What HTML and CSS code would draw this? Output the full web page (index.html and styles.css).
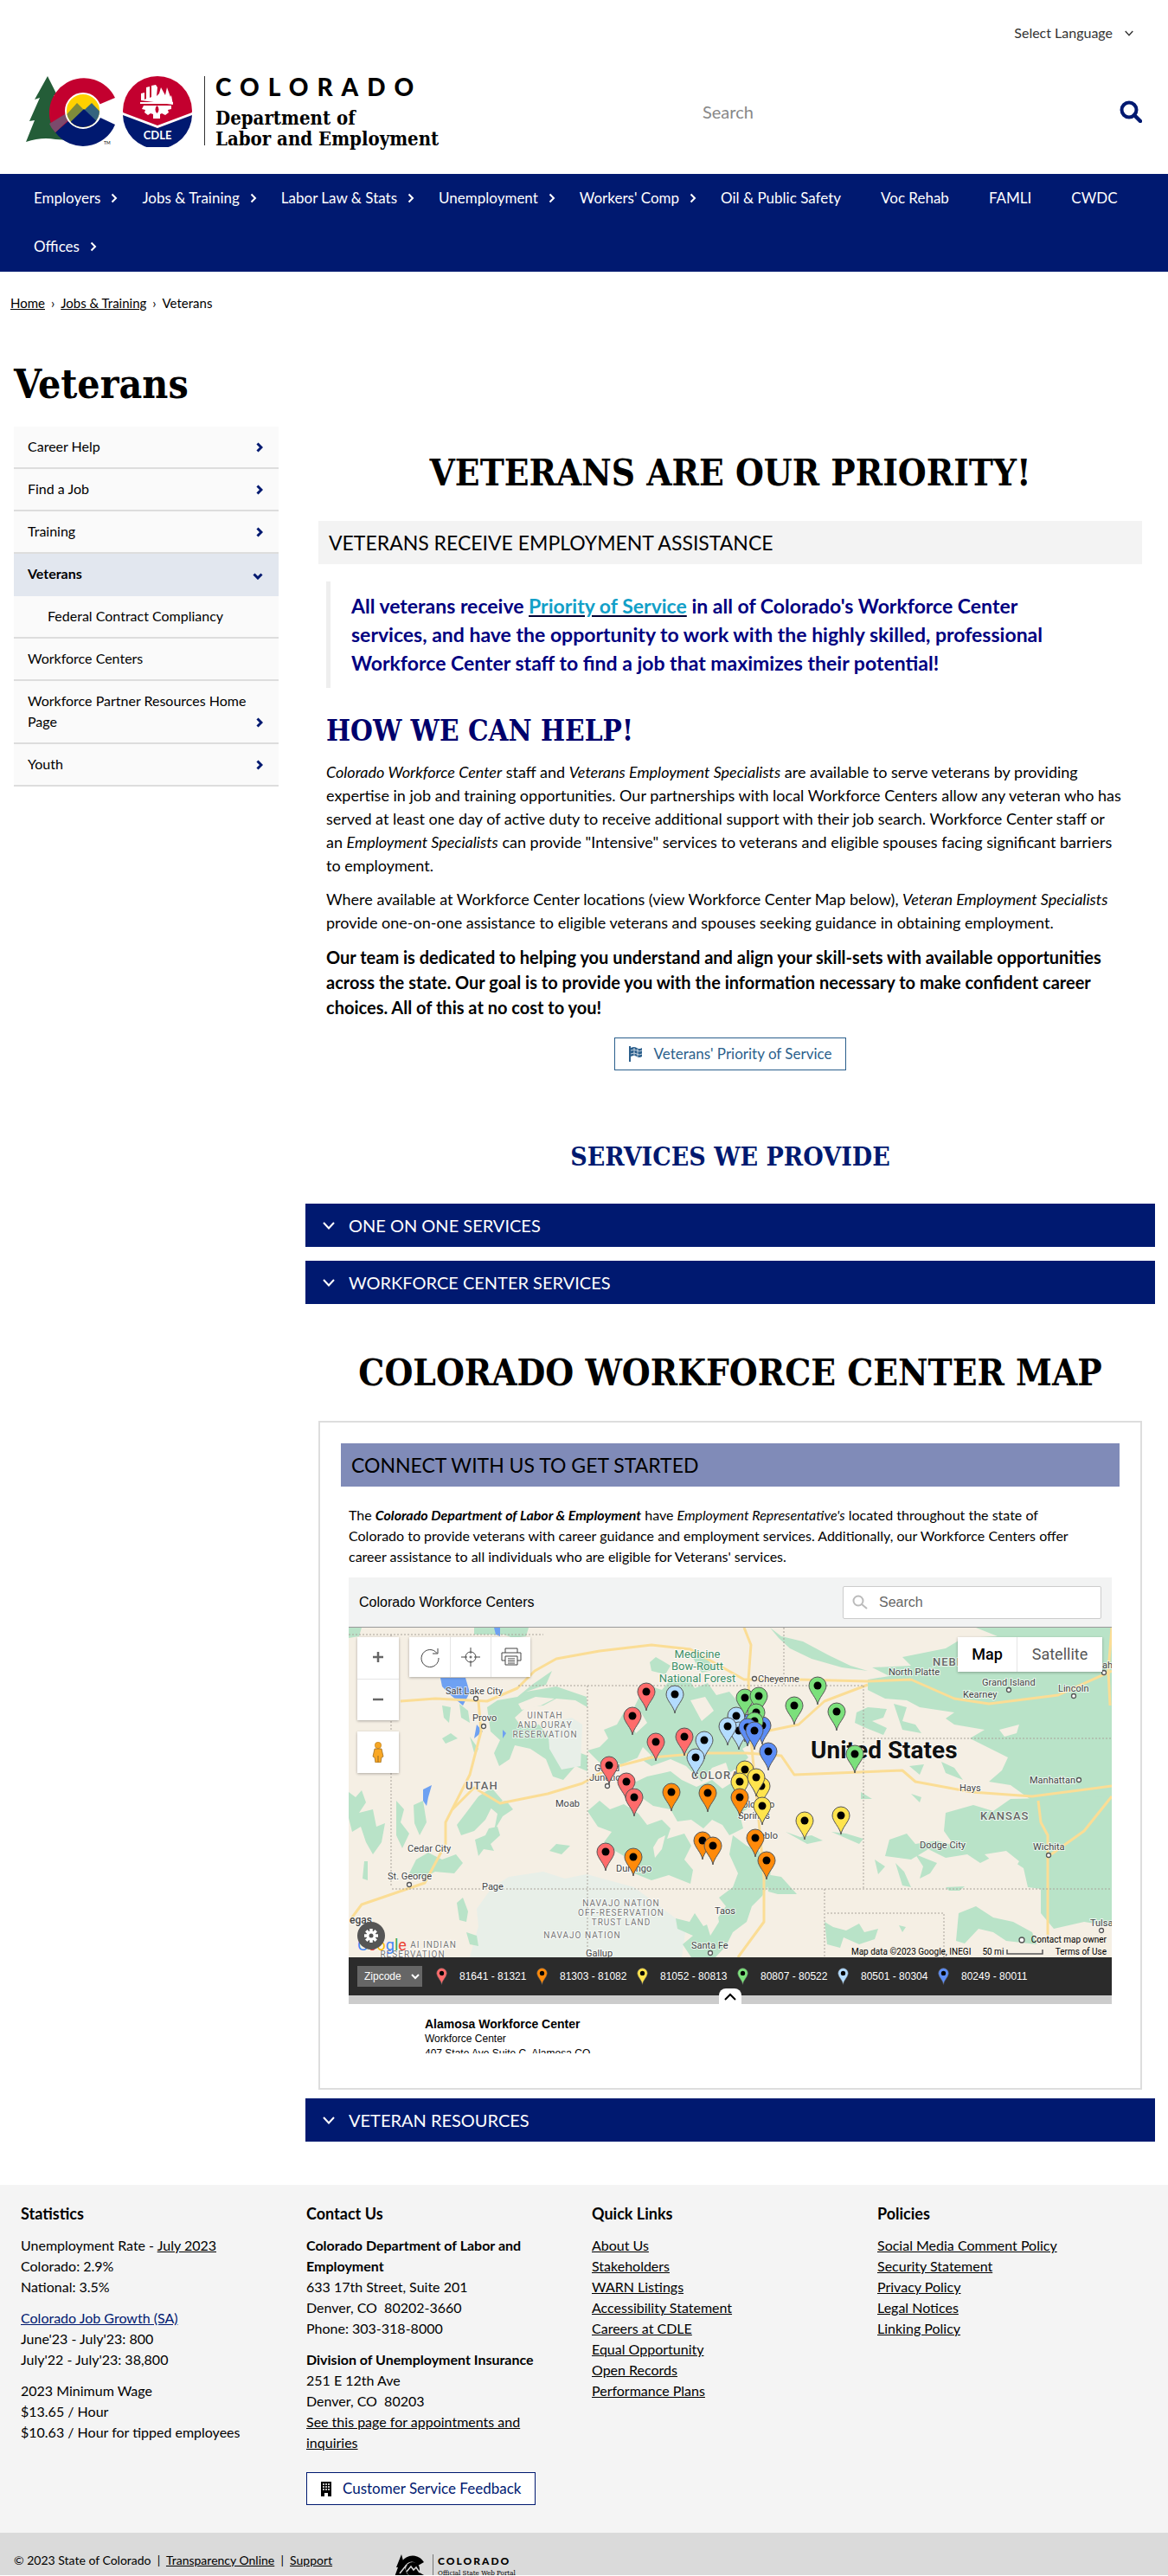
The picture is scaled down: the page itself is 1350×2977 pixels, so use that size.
FILE: index.html
```html
<!DOCTYPE html>
<html lang="en">
<head>
<meta charset="utf-8">
<meta name="viewport" content="width=device-width, initial-scale=1">
<title>Veterans | Department of Labor &amp; Employment</title>
<link rel="stylesheet" href="styles.css">
</head>
<body>
<svg class="defs" width="0" height="0" aria-hidden="true">
  <clipPath id="sun"><circle cx="66" cy="40" r="19"/></clipPath>
  <g id="pin-shape"><path d="M11 33C10 25 1 18 1 11a10 10 0 0 1 20 0c0 7-9 14-10 22z" fill="currentColor" stroke="#555" stroke-width="1"/><circle cx="11" cy="11" r="4.5" fill="#000"/></g>
  <symbol id="right" viewBox="0 0 8 12"><path d="M1.5 1.5 6 6 1.5 10.5" fill="none" stroke="currentColor" stroke-width="2"/></symbol>
  <symbol id="right-bold" viewBox="0 0 8 12"><path d="M1.5 1.5 6 6 1.5 10.5" fill="none" stroke="currentColor" stroke-width="3"/></symbol>
  <symbol id="down" viewBox="0 0 14 9"><path d="M1 1 7 7.5 13 1" fill="none" stroke="currentColor" stroke-width="2"/></symbol>
  <symbol id="down-bold" viewBox="0 0 12 8"><path d="M1.5 1.5 6 6 10.5 1.5" fill="none" stroke="currentColor" stroke-width="3"/></symbol>
  <symbol id="pin" viewBox="0 0 22 34"><use href="#pin-shape"/></symbol>
</svg>

<header class="masthead">
  <div class="language">
    <button class="language-button" type="button">Select Language <svg class="icon-down-small"><use href="#down"/></svg></button>
  </div>
  <div class="brand-row">
    <a class="brand" href="#" aria-label="Colorado Department of Labor and Employment">
      <svg class="brand-mark" viewBox="0 0 206 82">
        <path d="M25 0 36 22 32 22 44 48 50 74 34 73Q18 70 0 76L10 51 4 52 16 25 10 27z" fill="#245d38"/>
        <path d="M103 25A40 40 0 1 0 34 65L52 50A19 19 0 0 1 84 33z" fill="#c3002f"/>
        <path d="M34 65A40 40 0 0 0 103 56L86 48A21 21 0 0 1 50 51z" fill="#001970"/>
        <path d="M27 55 45 44 51 49 34 65Q29 60 27 55z" fill="#7b4a6c"/>
        <circle cx="66" cy="40" r="20" fill="#ffd100" stroke="#fff" stroke-width="2"/>
        <g clip-path="url(#sun)">
          <path d="M40 52 59 31 78 50 60 64z" fill="#7f8c3a"/>
          <path d="M60 46 76 31 92 48 82 60z" fill="#35647e"/>
          <path d="M44 60 67 38 90 60V70H44z" fill="#001970"/>
        </g>
        <text class="brand-tm" x="90" y="79">TM</text>
        <circle cx="152" cy="40" r="40" fill="#c3002f"/>
        <path d="M112 44 152 60 192 44A40 40 0 0 1 112 44z" fill="#001970"/>
        <path d="M112 42 152 57 192 42v3L152 60 112 45z" fill="#fff"/>
        <path d="M132 30h38v2h-38zM133 28V20l4-1v8l2-1V13l4-1v13l2-1V11l5-1 2 3-1 10 3-3 2-7 5 9 2-9 4 11 1-2 2 11z" fill="#fff"/>
        <path d="M136 34h32v4l-4 1 1 3-4 3-4-2-2 1v5h-8v-5l-3-1-3 2-4-3 1-3-4-1zM151.500 34a6 6 0 0 0 0 9 6 6 0 0 0 0-9" fill="#fff" fill-rule="evenodd"/>
        <text class="brand-cdle" x="152" y="73">CDLE</text>
      </svg>
      <span class="brand-text">
        <span class="brand-state">COLORADO</span>
        <span class="brand-dept">Department of<br>Labor and Employment</span>
      </span>
    </a>
    <form class="search">
      <input class="search-input" type="search" placeholder="Search" aria-label="Search">
      <button class="search-button" type="button" aria-label="Submit search"><svg viewBox="0 0 26 26" width="26" height="26"><circle cx="11" cy="11" r="8.5" fill="none" stroke="#001970" stroke-width="4"/><path d="M17 17l7 7" stroke="#001970" stroke-width="4.5" stroke-linecap="round"/></svg></button>
    </form>
  </div>
</header>

<nav class="main-nav" aria-label="Main">
  <a class="nav-item" href="#">Employers <svg class="icon-right"><use href="#right"/></svg></a>
  <a class="nav-item" href="#">Jobs &amp; Training <svg class="icon-right"><use href="#right"/></svg></a>
  <a class="nav-item" href="#">Labor Law &amp; Stats <svg class="icon-right"><use href="#right"/></svg></a>
  <a class="nav-item" href="#">Unemployment <svg class="icon-right"><use href="#right"/></svg></a>
  <a class="nav-item" href="#">Workers' Comp <svg class="icon-right"><use href="#right"/></svg></a>
  <a class="nav-item plain" href="#">Oil &amp; Public Safety</a>
  <a class="nav-item plain" href="#">Voc Rehab</a>
  <a class="nav-item plain" href="#">FAMLI</a>
  <a class="nav-item plain" href="#">CWDC</a>
  <a class="nav-item" href="#">Offices <svg class="icon-right"><use href="#right"/></svg></a>
</nav>

<nav class="breadcrumb" aria-label="Breadcrumb"><a href="#">Home</a> <span>›</span> <a href="#">Jobs &amp; Training</a> <span>›</span> <span>Veterans</span></nav>

<h1 class="page-title">Veterans</h1>

<div class="columns">
  <nav class="side-nav" aria-label="Section">
    <a class="side-item" href="#">Career Help <svg class="icon-right"><use href="#right-bold"/></svg></a>
    <a class="side-item" href="#">Find a Job <svg class="icon-right"><use href="#right-bold"/></svg></a>
    <a class="side-item" href="#">Training <svg class="icon-right"><use href="#right-bold"/></svg></a>
    <a class="side-item current" href="#">Veterans <svg class="icon-down"><use href="#down-bold"/></svg></a>
    <a class="side-item child" href="#">Federal Contract Compliancy</a>
    <a class="side-item" href="#">Workforce Centers</a>
    <a class="side-item" href="#">Workforce Partner Resources Home Page <svg class="icon-right"><use href="#right-bold"/></svg></a>
    <a class="side-item" href="#">Youth <svg class="icon-right"><use href="#right-bold"/></svg></a>
  </nav>

  <main class="content">
    <section class="panel">
      <h2 class="title">VETERANS ARE OUR PRIORITY!</h2>
      <h3 class="band">VETERANS RECEIVE EMPLOYMENT ASSISTANCE</h3>
      <blockquote class="quote">All veterans receive <a href="#">Priority of Service</a> in all of Colorado's Workforce Center services, and have the opportunity to work with the highly skilled, professional Workforce Center staff to find a job that maximizes their potential!</blockquote>
      <div class="prose">
        <h2 class="help-title">HOW WE CAN HELP!</h2>
        <p><em>Colorado Workforce Center</em> staff and <em>Veterans Employment Specialists</em> are available to serve veterans by providing expertise in job and training opportunities. Our partnerships with local Workforce Centers allow any veteran who has served at least one day of active duty to receive additional support with their job search. Workforce Center staff or<br>an <em>Employment Specialists</em> can provide "Intensive" services to veterans and eligible spouses facing significant barriers<br>to employment.</p>
        <p>Where available at Workforce Center locations (view Workforce Center Map below), <em>Veteran Employment Specialists</em> provide one-on-one assistance to eligible veterans and spouses seeking guidance in obtaining employment.</p>
        <p class="strong">Our team is dedicated to helping you understand and align your skill-sets with available opportunities across the state. Our goal is to provide you with the information necessary to make confident career choices. All of this at no cost to you!</p>
      </div>
      <a class="outline-button priority" href="#"><svg width="16" height="18" viewBox="0 0 16 18"><path d="M1 0v18" stroke="#2b5f8c" stroke-width="2"/><path d="M2 2q4-2 7 0t6 0v10q-3 2-6 0t-7 0z" fill="#2b5f8c"/><path d="M6 2v9M10 3v9M2 5q4-2 7 0t6 0M2 9q4-2 7 0t6 0" stroke="#fff" stroke-width=".7" fill="none"/></svg>Veterans' Priority of Service</a>
    </section>

    <h2 class="services-title">SERVICES WE PROVIDE</h2>
    <button class="accordion" type="button"><svg class="icon-accordion"><use href="#down"/></svg>ONE ON ONE SERVICES</button>
    <button class="accordion" type="button"><svg class="icon-accordion"><use href="#down"/></svg>WORKFORCE CENTER SERVICES</button>

    <h2 class="title map-title">COLORADO WORKFORCE CENTER MAP</h2>
    <section class="card">
      <h3 class="band blue">CONNECT WITH US TO GET STARTED</h3>
      <div class="card-body">
        <p>The <strong><em>Colorado Department of Labor &amp; Employment</em></strong> have <em>Employment Representative's</em> located throughout the state of<br>Colorado to provide veterans with career guidance and employment services. Additionally, our Workforce Centers offer<br>career assistance to all individuals who are eligible for Veterans' services.</p>
        <div class="widget">
          <div class="widget-head">
            <span>Colorado Workforce Centers</span>
            <label class="widget-search"><svg width="18" height="18" viewBox="0 0 18 18"><circle cx="7" cy="7" r="5.5" fill="none" stroke="#bbb" stroke-width="2"/><path d="M11 11l6 5" stroke="#bbb" stroke-width="2"/></svg><input type="search" placeholder="Search" aria-label="Search centers"></label>
          </div>
          <div class="map">
            <svg class="map-art" viewBox="0 0 882 381" preserveAspectRatio="xMidYMid slice">
              <rect width="882" height="381" fill="#f5efe4"/>
              <path d="M165 301 185 288 225 282 250 290 275 285 330 300 370 330 390 345 385 381 140 381 150 345 148 325z" fill="#e8efe8"/>
              <g fill="#b9e3c8">
                <path d="M725 0 882 0 882 200 790 200 765 182 740 178 755 165 762 150 742 140 718 128 735 118 700 112 690 105 700 98 660 92 645 84 620 82 600 72 600 60 625 56 605 46 650 44 640 34 690 24 710 12 750 10z"/>
                <path d="M690 214 722 205 745 212 765 198 882 195 882 345 850 340 815 348 800 330 800 302 785 300 780 278 765 268 750 262 730 272 715 262 690 266 670 256 650 268 620 264 625 245 645 238 655 250 680 246 700 252 688 235z"/>
                <path d="M608 268 620 276 612 285zM632 272 642 282 650 300 640 298zM655 262 680 272 672 284 660 290 664 276z"/>
                <path d="M690 300 712 299 706 304 694 304zM705 330 725 322 745 335 768 340 790 352 795 366 760 362 745 352 728 348 712 365 702 362z"/>
                <path d="M550 340 560 346 575 350 590 342 596 352 612 348 608 360 590 366 572 358 568 370 553 366zM636 344 644 346 640 352z"/>
                <path d="M587 98 600 92 622 94 618 104 605 108 622 116 618 124 598 116 585 110zM630 88 645 92 640 108 655 112 662 122 640 118zM648 160 665 158 660 170zM685 155 700 162 710 176 690 168z"/>
                <path d="M487 0 500 10 525 16 555 32 580 44 600 50 570 46 535 36 510 24 497 12z"/>
                <path d="M592 190 605 198 592 198zM650 192 662 196 660 202z"/>
                <path d="M0 0 15 0 12 10 0 12zM145 0 208 0 205 10 190 12 180 8 145 8z"/>
                <path d="M160 92 172 84 195 80 212 66 235 50 228 66 205 74 240 68 275 80 276 92 262 84 240 82 225 90 205 92 192 104 200 115 220 112 235 130 255 140 276 148 276 166 262 160 248 176 236 172 228 152 210 140 192 136 186 152 174 160 168 145 175 130 164 120z"/>
                <path d="M135 215 150 195 165 185 178 200 165 208 158 222 145 235 130 240 125 228zM168 235 172 215 160 205 182 200 190 210 178 218z"/>
                <path d="M276 142 290 138 300 128 295 118 310 112 318 98 330 92 338 76 350 68 362 72 372 60 392 58 400 70 415 64 425 78 440 74 455 92 464 108 468 132 455 140 462 150 452 160 440 168 436 156 420 162 408 178 390 160 372 152 350 160 335 150 315 158 305 168 290 156z"/>
                <path d="M276 212 290 200 302 210 318 204 335 215 345 228 362 222 372 232 368 244 388 238 396 252 388 268 398 280 395 296 370 286 350 292 330 284 325 268 308 258 295 248 304 236 288 230z"/>
                <path d="M345 172 372 166 385 176 402 184 420 176 432 186 448 176 460 190 462 208 452 216 456 232 440 240 432 228 420 222 410 232 396 222 380 224 372 210 352 206 338 196 328 180z"/>
                <path d="M444 240 460 252 474 258 488 280 486 296 478 310 466 322 460 340 444 352 436 368 424 381 396 381 386 366 398 356 380 348 378 336 394 340 400 330 410 345 425 338 436 322 428 312 444 300 450 284 440 262z"/>
                <path d="M482 285 500 288 518 308 496 308 485 305zM505 236 522 242 535 240 548 246 530 250zM558 236 575 238 595 244 590 250z"/>
                <path d="M0 190 8 196 15 188 20 202 12 214 28 210 32 230 42 226 38 248 28 262 20 248 14 230 4 236 0 220z"/>
                <path d="M55 200 64 210 60 225 70 238 62 255 55 240zM75 205 86 200 90 225 82 240 76 226z"/>
                <path d="M78 268 92 260 108 268 124 262 132 272 122 284 100 282 84 290 70 284z"/>
                <path d="M146 245 158 240 162 232 172 230 175 240 164 250 168 258 156 256 150 264zM240 250 256 252 246 262 232 258z"/>
                <path d="M125 318 132 312 138 328 136 340 128 338zM136 352 148 356 150 368 140 366z"/>
                <path d="M108 90 118 92 116 110 110 104zM128 88 138 96 140 110 130 104zM108 128 118 122 126 128 112 134zM140 126 150 140 146 148zM18 270 22 270 22 292 16 290z"/>
                <path d="M348 40 355 34 372 44 366 54 350 50zM395 30 412 34 425 48 408 52z"/>
              </g>
              <path d="M230 110 258 104 270 112 268 160 246 164 232 140z" fill="#e8efe8"/>
              <g fill="#f5efe4">
                <path d="M196 88 216 80 238 82 222 90 200 95zM322 105 338 98 345 110 332 122zM395 84 412 80 422 96 408 108zM340 138 350 148 332 154zM352 254 358 244 366 240 362 256 354 266z"/>
                <path d="M418 262 430 256 438 270 432 300 424 318 428 340 418 356 410 330 414 300zM752 118 775 112 772 122 758 126zM735 262 760 258 775 270 768 282 750 276z"/>
              </g>
              <path d="M106 58 135 58 140 75 132 90 118 78 108 68zM148 112 155 120 145 128zM86 187 96 182 92 196 90 206 86 200zM168 0 175 0 175 10 170 8zM178 118 182 122 178 128z" fill="#6ea1f2"/>
              <g fill="none" stroke="#fbdd95" stroke-width="3" stroke-linejoin="round">
                <path d="M60 85 100 82 160 85 195 70 215 50 240 36 290 27 350 20 395 25 457 60 520 60 600 62 650 60 700 82 740 88 820 78 882 50"/>
                <path d="M457 0 465 20 462 60 465 130 472 200 480 290 480 340 450 381"/>
                <path d="M150 85 153 120 140 170 112 225 112 250 88 295 15 320 0 340"/>
                <path d="M120 210 145 185 175 203 230 192 270 180 300 163 350 150 410 145 460 145 500 148 515 170 640 165 655 178 720 190 790 195 882 183"/>
                <path d="M797 200 800 225 808 240 808 355M882 195 850 235 812 262M882 0 878 50 880 90M457 125 520 112 550 85 600 66"/>
              </g>
              <g fill="none" stroke="#a9a39b" stroke-width="1" stroke-dasharray="2 2">
                <path d="M0 8H225M49 8V300M196 67H595M276 67V381M50 302H882M595 67V302M595 128H882M503 0V67M550 302V381M553 330H688V381"/>
              </g>
              <g class="state">
                <text x="135" y="187">UTAH</text><text x="396" y="175">COLORADO</text><text x="730" y="222">KANSAS</text><text x="675" y="44">NEBRASKA</text>
              </g>
              <g class="forest">
                <text x="403" y="35">Medicine</text><text x="403" y="49">Bow-Routt</text><text x="403" y="63">National Forest</text>
              </g>
              <g class="reserve">
                <text x="227" y="105">UINTAH</text><text x="227" y="116">AND OURAY</text><text x="227" y="127">RESERVATION</text>
                <text x="315" y="322">NAVAJO NATION</text><text x="315" y="333">OFF-RESERVATION</text><text x="315" y="344">TRUST LAND</text><text x="270" y="359">NAVAJO NATION</text>
                <text x="98" y="370">AI INDIAN</text><text x="74" y="381">RESERVATION</text>
              </g>
              <g class="city">
                <text x="112" y="77">Salt Lake City</text><text x="143" y="108">Provo</text><text x="239" y="207">Moab</text><text x="284" y="166">Grand</text><text x="278" y="177">Junction</text><text x="68" y="259">Cedar City</text><text x="45" y="291">St. George</text><text x="154" y="303">Page</text><text x="309" y="282">Durango</text><text x="423" y="331">Taos</text><text x="396" y="371">Santa Fe</text><text x="274" y="380">Gallup</text><text x="473" y="63">Cheyenne</text><text x="624" y="55">North Platte</text><text x="732" y="67">Grand Island</text><text x="710" y="81">Kearney</text><text x="820" y="74">Lincoln</text><text x="871" y="47">ah</text><text x="787" y="180">Manhattan</text><text x="706" y="189">Hays</text><text x="660" y="255">Dodge City</text><text x="791" y="257">Wichita</text><text x="857" y="345">Tulsa</text><text x="448" y="208">Colorado</text><text x="450" y="221">Springs</text><text x="462" y="244">Pueblo</text>
              </g>
              <text class="city big" x="1" y="342">egas</text>
              <g fill="#fff" stroke="#555" stroke-width="1.3"><circle cx="147" cy="82" r="2.5"/><circle cx="156" cy="114" r="2.5"/><circle cx="299" cy="183" r="2.5"/><circle cx="70" cy="297" r="2.5"/><circle cx="418" cy="376" r="2.5"/><circle cx="469" cy="59" r="2.5"/><circle cx="763" cy="72" r="2.5"/><circle cx="838" cy="79" r="2.5"/><circle cx="873" cy="52" r="2.5"/><circle cx="844" cy="176" r="2.5"/><circle cx="809" cy="263" r="2.5"/><circle cx="870" cy="350" r="2.5"/><circle cx="778" cy="361" r="3"/></g>
              <text class="country" x="534" y="151">United States</text>
              <g class="pin-blue"><use href="#pin-shape" x="447" y="99"/><use href="#pin-shape" x="467" y="102"/></g>
              <g class="pin-sky"><use href="#pin-shape" x="366" y="66"/><use href="#pin-shape" x="437" y="91"/><use href="#pin-shape" x="440" y="108"/><use href="#pin-shape" x="427" y="103"/><use href="#pin-shape" x="400" y="119"/><use href="#pin-shape" x="390" y="139"/></g>
              <g class="pin-green"><use href="#pin-shape" x="447" y="70"/><use href="#pin-shape" x="463" y="68"/><use href="#pin-shape" x="460" y="87"/><use href="#pin-shape" x="458" y="97"/><use href="#pin-shape" x="531" y="56"/><use href="#pin-shape" x="504" y="79"/><use href="#pin-shape" x="553" y="86"/><use href="#pin-shape" x="574" y="135"/></g>
              <g class="pin-blue"><use href="#pin-shape" x="450" y="104"/><use href="#pin-shape" x="458" y="108"/><use href="#pin-shape" x="474" y="132"/></g>
              <g class="pin-yellow"><use href="#pin-shape" x="447" y="153"/><use href="#pin-shape" x="441" y="167"/><use href="#pin-shape" x="466" y="172"/><use href="#pin-shape" x="460" y="162"/><use href="#pin-shape" x="467" y="195"/><use href="#pin-shape" x="516" y="212"/><use href="#pin-shape" x="558" y="206"/></g>
              <g class="pin-red"><use href="#pin-shape" x="333" y="63"/><use href="#pin-shape" x="317" y="91"/><use href="#pin-shape" x="344" y="121"/><use href="#pin-shape" x="377" y="115"/><use href="#pin-shape" x="290" y="148"/><use href="#pin-shape" x="310" y="167"/><use href="#pin-shape" x="319" y="185"/><use href="#pin-shape" x="286" y="248"/></g>
              <g class="pin-orange"><use href="#pin-shape" x="362" y="179"/><use href="#pin-shape" x="404" y="180"/><use href="#pin-shape" x="441" y="185"/><use href="#pin-shape" x="459" y="232"/><use href="#pin-shape" x="472" y="258"/><use href="#pin-shape" x="398" y="235"/><use href="#pin-shape" x="410" y="241"/><use href="#pin-shape" x="318" y="254"/></g>
            </svg>
            <div class="zoom-controls">
              <button type="button" aria-label="Zoom in"><svg width="12" height="12"><path d="M6 0v12M0 6h12" stroke="#666" stroke-width="2.5"/></svg></button>
              <button type="button" aria-label="Zoom out"><svg width="12" height="12"><path d="M0 6h12" stroke="#666" stroke-width="2.5"/></svg></button>
            </div>
            <button class="street-view" type="button" aria-label="Street view"><svg width="14" height="24" viewBox="0 0 14 24"><circle cx="7" cy="4" r="3.7" fill="#f5a623" stroke="#b97a1a" stroke-width=".6"/><path d="M3 8h8l2 9-2 1-1 6H4l-1-6-2-1z" fill="#f9a825" stroke="#9a6a20" stroke-width=".8"/><path d="M7 16v8" stroke="#9a6a20"/></svg></button>
            <div class="map-tools">
              <button type="button" aria-label="Reset map"><svg width="24" height="24" fill="none" stroke="#444"><path d="M20 7.500A10 10 0 1 0 22 13M21 2v6h-6"/></svg></button>
              <button type="button" aria-label="My location"><svg width="24" height="24" fill="none" stroke="#444"><circle cx="12" cy="12" r="6"/><path d="M12 1v7M12 16v7M1 12h7M16 12h7"/><circle cx="12" cy="12" r="1"/></svg></button>
              <button type="button" aria-label="Print map"><svg width="24" height="24" fill="none" stroke="#444"><path d="M5 7V2h14v5M5 16H1V7h22v9h-4M5 11h14v10H5zM8 14h8M8 16.500h8M8 19h8"/></svg></button>
            </div>
            <div class="map-types"><button class="chosen" type="button">Map</button><button type="button">Satellite</button></div>
            <span class="google"><i class="g1">G</i><i class="g2">o</i><i class="g3">o</i><i class="g1">g</i><i class="g4">l</i><i class="g2">e</i></span>
            <button class="gear" type="button" aria-label="Settings"><svg width="18" height="18" viewBox="0 0 18 18"><path d="M9 1v16M1 9h16M3.300 3.300l11.400 11.400M14.700 3.300 3.300 14.700" stroke="#fff" stroke-width="3.500"/><circle cx="9" cy="9" r="5.500" fill="#fff"/><circle cx="9" cy="9" r="2.500" fill="#555"/></svg></button>
            <a class="map-owner" href="#">Contact map owner</a>
            <div class="map-credit"><span>Map data ©2023 Google, INEGI</span><span>50 mi <svg width="44" height="6"><path d="M1 0v5h41V0" fill="none" stroke="#555" stroke-width="1.500"/></svg></span><a href="#">Terms of Use</a></div>
          </div>
          <div class="legend">
            <select aria-label="Color pins by"><option>Zipcode</option></select>
            <span class="key"><svg class="pin-red"><use href="#pin"/></svg>81641 - 81321</span>
            <span class="key"><svg class="pin-orange"><use href="#pin"/></svg>81303 - 81082</span>
            <span class="key"><svg class="pin-yellow"><use href="#pin"/></svg>81052 - 80813</span>
            <span class="key"><svg class="pin-green"><use href="#pin"/></svg>80807 - 80522</span>
            <span class="key"><svg class="pin-sky"><use href="#pin"/></svg>80501 - 80304</span>
            <span class="key"><svg class="pin-blue"><use href="#pin"/></svg>80249 - 80011</span>
          </div>
          <div class="handle"><button type="button" aria-label="Expand list"><svg width="14" height="9"><path d="M1 8 7 2l6 6" fill="none" stroke="#000" stroke-width="2"/></svg></button></div>
          <div class="listing"><strong>Alamosa Workforce Center</strong><span>Workforce Center</span><span>407 State Ave Suite C, Alamosa CO</span></div>
        </div>
      </div>
    </section>
    <button class="accordion" type="button"><svg class="icon-accordion"><use href="#down"/></svg>VETERAN RESOURCES</button>
  </main>
</div>

<footer>
  <div class="footer-columns">
    <section>
      <h2>Statistics</h2>
      <p>Unemployment Rate - <a href="#">July 2023</a><br>Colorado: 2.9%<br>National: 3.5%</p>
      <p><a class="growth" href="#">Colorado Job Growth (SA)</a><br>June'23 - July'23: 800<br>July'22 - July'23: 38,800</p>
      <p>2023 Minimum Wage<br>$13.65 / Hour<br>$10.63 / Hour for tipped employees</p>
    </section>
    <section>
      <h2>Contact Us</h2>
      <p><strong>Colorado Department of Labor and Employment</strong><br>633 17th Street, Suite 201<br>Denver, CO &nbsp;80202-3660<br>Phone: 303-318-8000</p>
      <p><strong>Division of Unemployment Insurance</strong><br>251 E 12th Ave<br>Denver, CO &nbsp;80203<br><a href="#">See this page for appointments and inquiries</a></p>
      <a class="outline-button feedback" href="#"><svg width="12" height="17" viewBox="0 0 12 17"><path d="M0 0h12v17H8v-4H4v4H0z"/><path d="M2 3h2M5 3h2M8 3h2M2 6h2M5 6h2M8 6h2M2 9h2M5 9h2M8 9h2" stroke="#fff" stroke-width="1.500"/></svg>Customer Service Feedback</a>
    </section>
    <section>
      <h2>Quick Links</h2>
      <ul><li><a href="#">About Us</a></li><li><a href="#">Stakeholders</a></li><li><a href="#">WARN Listings</a></li><li><a href="#">Accessibility Statement</a></li><li><a href="#">Careers at CDLE</a></li><li><a href="#">Equal Opportunity</a></li><li><a href="#">Open Records</a></li><li><a href="#">Performance Plans</a></li></ul>
    </section>
    <section>
      <h2>Policies</h2>
      <ul><li><a href="#">Social Media Comment Policy</a></li><li><a href="#">Security Statement</a></li><li><a href="#">Privacy Policy</a></li><li><a href="#">Legal Notices</a></li><li><a href="#">Linking Policy</a></li></ul>
    </section>
  </div>
  <div class="legal">
    <span class="legal-links">© 2023 State of Colorado &nbsp;|&nbsp; <a href="#">Transparency Online</a> &nbsp;|&nbsp; <a href="#">Support</a></span>
    <a class="portal" href="#"><svg width="36" height="34" viewBox="0 0 36 34"><path d="M8 0 15 26H0L4 15 2 15z"/><path d="M34 9A15 15 0 1 0 34 24L27 20A8 8 0 1 1 27 13z"/><circle cx="21" cy="17" r="8"/><path d="M14 20l5-6 3 4 3-3 4 6M6 22l8-10" stroke="#dadada" fill="none" stroke-width="1.500"/></svg><span class="portal-text"><b>COLORADO</b><span>Official State Web Portal</span></span></a>
  </div>
</footer>
</body>
</html>
```

FILE: styles.css
```css
* { box-sizing: border-box; }
body { margin: 0; background: #fff; color: #000; font: 16px/24px Lato, "Open Sans", sans-serif; }
h1, h2, h3, p, ul, blockquote { margin: 0; }
ul { padding: 0; list-style: none; }
a { color: inherit; }
button { font: inherit; border: 0; cursor: pointer; }
.defs { position: absolute; }

/* Header */
.language { display: flex; justify-content: flex-end; padding: 24px 40px 0; }
.language-button { display: flex; align-items: center; gap: 14px; padding: 0; background: none; color: #333; line-height: 28px; }
.icon-down-small { width: 10px; height: 7px; }
.brand-row { display: flex; justify-content: space-between; align-items: flex-start; padding: 36px 30px 31px; }
.brand { display: flex; text-decoration: none; }
.brand-mark { width: 206px; height: 82px; }
.brand-tm { font: 5px Lato, sans-serif; }
.brand-cdle { font: bold 13px Lato, sans-serif; fill: #fff; text-anchor: middle; }
.brand-text { display: flex; flex-direction: column; gap: 12px; height: 80px; padding-left: 12px; border-left: 1px solid #333; }
.brand-state { font: 900 28px/24px Lato, sans-serif; letter-spacing: 10px; }
.brand-dept { font: bold 22px/24px "DejaVu Serif Condensed", "DejaVu Serif", serif; white-space: nowrap; }
.search { display: flex; align-items: center; width: 508px; height: 82px; }
.search-input { flex: 1; min-width: 0; border: 0; outline: 0; padding: 0; font: 20px Lato, sans-serif; background: none; }
.search-input::placeholder { color: #888; opacity: 1; }
.search-button { padding: 0; background: none; line-height: 0; }

/* Main navigation */
.main-nav { display: flex; flex-wrap: wrap; padding: 0 8px 1px 39px; background: #001970; }
.nav-item { display: flex; align-items: center; gap: 12px; height: 56px; padding-right: 28px; color: #fff; font-size: 17px; text-decoration: none; white-space: nowrap; }
.nav-item.plain { padding-right: 46px; }
.icon-right { flex: none; width: 8px; height: 12px; }

.breadcrumb { display: flex; gap: 7px; padding: 24px 12px 0; font-size: 15px; }
.page-title { padding: 52px 16px 19px; font: bold 46px/60px "DejaVu Serif Condensed", "DejaVu Serif", serif; }

/* Page columns */
.columns { display: flex; align-items: flex-start; gap: 31px; padding: 0 15px 34px 16px; }
.side-nav { flex: none; width: 306px; }
.side-item { display: flex; justify-content: space-between; align-items: flex-end; min-height: 49px; padding: 11px 18px 12px 16px; border-bottom: 2px solid #ddd; background: #fafafa; text-decoration: none; }
.side-item svg { margin-bottom: 5px; color: #001970; }
.icon-down { flex: none; width: 12px; height: 8px; }
.side-item.current { background: #e2e7ef; border-color: #e2e7ef; font-weight: bold; }
.side-item.child { padding-left: 39px; }
.content { flex: 1; min-width: 0; display: flex; flex-direction: column; }
.panel { display: flex; flex-direction: column; padding: 24px 15px 0; }
.title { font: bold 42px/60px "DejaVu Serif Condensed", "DejaVu Serif", serif; text-align: center; }
.panel .title { margin-bottom: 25px; }
.band { padding: 0 12px; background: #f3f3f3; font-size: 23px; font-weight: normal; line-height: 50px; }
.quote { margin: 20px 20px 32px 9px; padding: 12px 50px 12px 24px; border-left: 5px solid #eee; color: #000080; font-size: 23px; font-weight: bold; line-height: 33px; }
.quote a { color: #12a0c8; text-decoration-color: #003; }
.prose { padding: 0 0 0 9px; display: flex; flex-direction: column; gap: 12px; font-size: 18px; line-height: 27px; }
.help-title { margin-bottom: 4px; color: #00006b; font: bold 33px/36px "DejaVu Serif Condensed", "DejaVu Serif", serif; }
.prose .strong { font-size: 20px; font-weight: bold; line-height: 29px; }
.outline-button { display: inline-flex; align-items: center; gap: 13px; height: 38px; padding: 0 16px; border: 1px solid #2b5f8c; background: #fff; color: #2b5f8c; font-size: 17px; text-decoration: none; white-space: nowrap; }
.priority { align-self: center; margin-top: 20px; }
.services-title { padding: 76px 0 30px; color: #001970; font: bold 30px/48px "DejaVu Serif Condensed", "DejaVu Serif", serif; text-align: center; }
.accordion { display: flex; align-items: center; gap: 16px; margin-bottom: 16px; padding: 0 20px; background: #001970; color: #fff; font-size: 20px; line-height: 50px; text-align: left; }
.icon-accordion { width: 14px; height: 9px; }
.map-title { padding: 34px 0 25px; }

/* Map card */
.card { margin: 0 15px 10px; padding: 24px 24px 40px; border: 2px solid #ddd; }
.band.blue { background: #808bb8; }
.card-body { display: flex; flex-direction: column; gap: 12px; padding: 21px 9px 0; }
.widget { height: 550px; overflow: hidden; font-family: "Liberation Sans", Arial, sans-serif; }
.widget-head { display: flex; justify-content: space-between; align-items: center; height: 58px; padding: 0 12px; border-bottom: 1px solid #999; background: #f2f3f3; font-size: 16px; }
.widget-search { display: flex; align-items: center; gap: 13px; width: 299px; height: 38px; padding: 0 10px; border: 1px solid #ccc; border-radius: 2px; background: #fff; }
.widget-search input { flex: 1; min-width: 0; border: 0; outline: 0; padding: 0; font: 16px "Liberation Sans", sans-serif; }
.widget-search input::placeholder { color: #666; opacity: 1; }
.map { position: relative; height: 381px; overflow: hidden; font-family: Roboto, sans-serif; }
.map-art { display: block; width: 100%; height: 100%; }
.map-art text { paint-order: stroke; stroke: #fff; stroke-width: 2px; stroke-opacity: .7; font-family: Roboto, sans-serif; }
.state { font-size: 13px; font-weight: 500; letter-spacing: 1px; fill: #666; }
.forest { font-size: 13px; fill: #3d8f66; text-anchor: middle; }
.reserve { font-size: 10px; letter-spacing: 1px; fill: #777; text-anchor: middle; }
.city { font-size: 11px; fill: #444; }
.city.big { font-size: 12px; font-weight: 500; }
.country { font-size: 28px; font-weight: 700; fill: #111; }
.pin-red { color: #ff6b6b; }
.pin-orange { color: #ff8a0a; }
.pin-yellow { color: #ffe44d; }
.pin-green { color: #7be07b; }
.pin-sky { color: #b3dcff; }
.pin-blue { color: #5c8df6; }
.zoom-controls, .street-view, .map-tools, .map-types { position: absolute; background: #fff; box-shadow: 0 1px 3px rgba(0, 0, 0, .3); }
.zoom-controls { left: 10px; top: 11px; display: grid; grid-template-rows: 48px 48px; width: 48px; }
.map button { padding: 0; background: #fff; }
.zoom-controls button + button { border-top: 1px solid #e5e5e5; }
.street-view { left: 10px; top: 120px; width: 48px; height: 48px; line-height: 0; }
.map-tools { left: 70px; top: 11px; display: grid; grid-template-columns: 47px 47px 46px; height: 46px; }
.map-tools button + button { border-left: 1px solid #e5e5e5; }
.map-tools svg { display: block; margin: auto; }
.map-types { right: 11px; top: 11px; display: flex; height: 40px; }
.map-types button { width: 98px; color: #565656; font-size: 18px; }
.map-types .chosen { width: 69px; border-right: 1px solid #e5e5e5; color: #000; font-weight: 500; }
.map .gear { position: absolute; left: 10px; top: 340px; width: 32px; height: 32px; border-radius: 50%; background: #555; line-height: 0; }
.google { position: absolute; left: 10px; top: 355px; font: 18px/24px Roboto, sans-serif; }
.google i { font-style: normal; }
.g1 { color: #4285f4; }
.g2 { color: #ea4335; }
.g3 { color: #fbbc05; }
.g4 { color: #34a853; }
.map-owner { position: absolute; right: 6px; top: 354px; font-size: 10px; line-height: 14px; text-decoration: none; }
.map-credit { position: absolute; right: 6px; top: 368px; display: flex; gap: 13px; font-size: 10px; line-height: 14px; }
.map-credit a { text-decoration: none; }
.legend { display: flex; align-items: center; gap: 16px; height: 44px; padding: 0 10px; background: #2b2b2b; color: #fff; font-size: 12px; }
.legend select { width: 75px; height: 24px; padding: 0 4px; border: 0; background: #666; color: #fff; font: 12px "Liberation Sans", sans-serif; }
.key { display: flex; align-items: center; gap: 14px; width: 100px; white-space: nowrap; }
.key svg { flex: none; width: 13px; height: 20px; }
.handle { display: flex; justify-content: center; align-items: flex-end; height: 10px; background: #ccc; }
.handle button { width: 26px; height: 18px; padding: 0; border-radius: 8px 8px 0 0; background: #fff; line-height: 0; }
.listing { display: flex; flex-direction: column; padding: 15px 88px 0; font-size: 12px; line-height: 17px; }
.listing strong { font-size: 14px; }

/* Footer */
footer { background: #f4f4f4; }
.footer-columns { display: grid; grid-template-columns: repeat(4, 1fr); padding: 20px 6px 32px 24px; }
.footer-columns section { padding-right: 40px; }
.footer-columns h2 { margin-bottom: 12px; font-size: 18px; line-height: 26px; }
.footer-columns p { margin-bottom: 12px; }
.growth { color: #001970; }
.feedback { margin-top: 10px; border-color: #001970; color: #001970; }
.legal { display: flex; align-items: flex-start; gap: 72px; max-height: 49px; overflow: hidden; padding: 20px 16px 0; background: #dadada; font-size: 14px; }
.portal { display: flex; gap: 8px; margin-top: 5px; text-decoration: none; }
.portal-text { display: flex; flex-direction: column; padding-left: 5px; border-left: 1px solid #777; font: 8px/12px "DejaVu Serif Condensed", serif; }
.portal-text b { font: 900 12px/16px Lato, sans-serif; letter-spacing: 2px; }
```
